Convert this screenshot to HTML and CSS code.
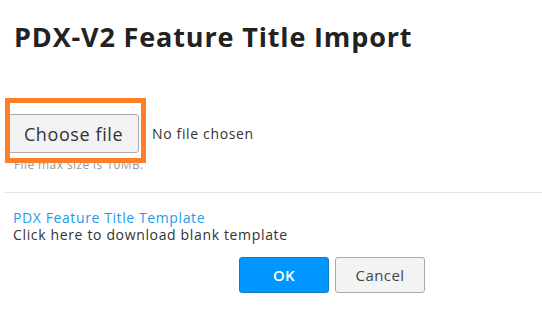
FILE: index.html
```html
<!DOCTYPE html>
<html>
<head>
<meta charset="utf-8">
<link rel="stylesheet" href="styles.css">
</head>
<body>
<div class="dialog">
  <h1 class="title">PDX-V2 Feature Title Import</h1>
  <div class="upload">
    <div class="file-row">
      <button class="file-btn">Choose file</button>
      <span class="file-status">No file chosen</span>
    </div>
    <div class="hint">File max size is 10MB.</div>
    <div class="highlight"></div>
  </div>
  <hr class="divider">
  <div class="template">
    <a class="template-link" href="#">PDX Feature Title Template</a>
    <div class="template-desc">Click here to download blank template</div>
  </div>
  <div class="actions">
    <button class="btn btn-ok">OK</button>
    <button class="btn btn-cancel">Cancel</button>
  </div>
</div>
</body>
</html>
```
FILE: styles.css
```css
html, body {
  margin: 0;
  padding: 0;
  background: #fff;
}
body {
  font-family: "Open Sans", "Liberation Sans", sans-serif;
  color: #333;
  width: 542px;
  height: 325px;
  overflow: hidden;
}
.title {
  margin: 0;
  padding: 18px 0 0 14px;
  font-size: 27px;
  font-weight: 700;
  line-height: 38px;
  color: #222;
  letter-spacing: 0.85px;
}
.upload {
  position: relative;
  margin-top: 58px;
  padding-left: 8px;
}
.file-row {
  display: flex;
  align-items: center;
  gap: 13px;
  height: 39px;
}
.file-btn {
  font-family: inherit;
  font-size: 18px;
  letter-spacing: 0.6px;
  color: #333;
  background: #f2f2f2;
  border: 1px solid #aaa;
  border-radius: 3px;
  height: 39px;
  width: 131px;
  padding: 0;
  text-align: center;
}
.file-status {
  font-size: 14px;
  letter-spacing: 0.65px;
  color: #333;
}
.hint {
  padding-left: 6px;
  margin-top: 5px;
  font-size: 12px;
  letter-spacing: 0.4px;
  line-height: 14px;
  color: #999;
}
.highlight {
  position: absolute;
  left: 5px;
  top: -16px;
  width: 131px;
  height: 55px;
  border: 5px solid #fd7f27;
}
.divider {
  margin: 20px 0 0 5px;
  border: 0;
  border-top: 1px solid #e3e3e3;
  height: 0;
}
.template {
  padding: 16px 0 0 13px;
  font-size: 14px;
  line-height: 17px;
}
.template-link {
  color: #1d9bf0;
  text-decoration: none;
  display: block;
  letter-spacing: 0.6px;
}
.template-desc {
  color: #333;
  letter-spacing: 0.65px;
}
.actions {
  display: flex;
  gap: 6px;
  padding: 14px 0 0 239px;
}
.btn {
  font-family: inherit;
  width: 90px;
  height: 36px;
  border-radius: 3px;
  font-size: 15px;
  letter-spacing: 0.4px;
}
.btn-ok {
  background: #0095ff;
  border: 1px solid #1378c2;
  color: #fff;
  font-weight: 600;
}
.btn-cancel {
  background: #f3f3f3;
  border: 1px solid #aaa;
  color: #444;
}
```
